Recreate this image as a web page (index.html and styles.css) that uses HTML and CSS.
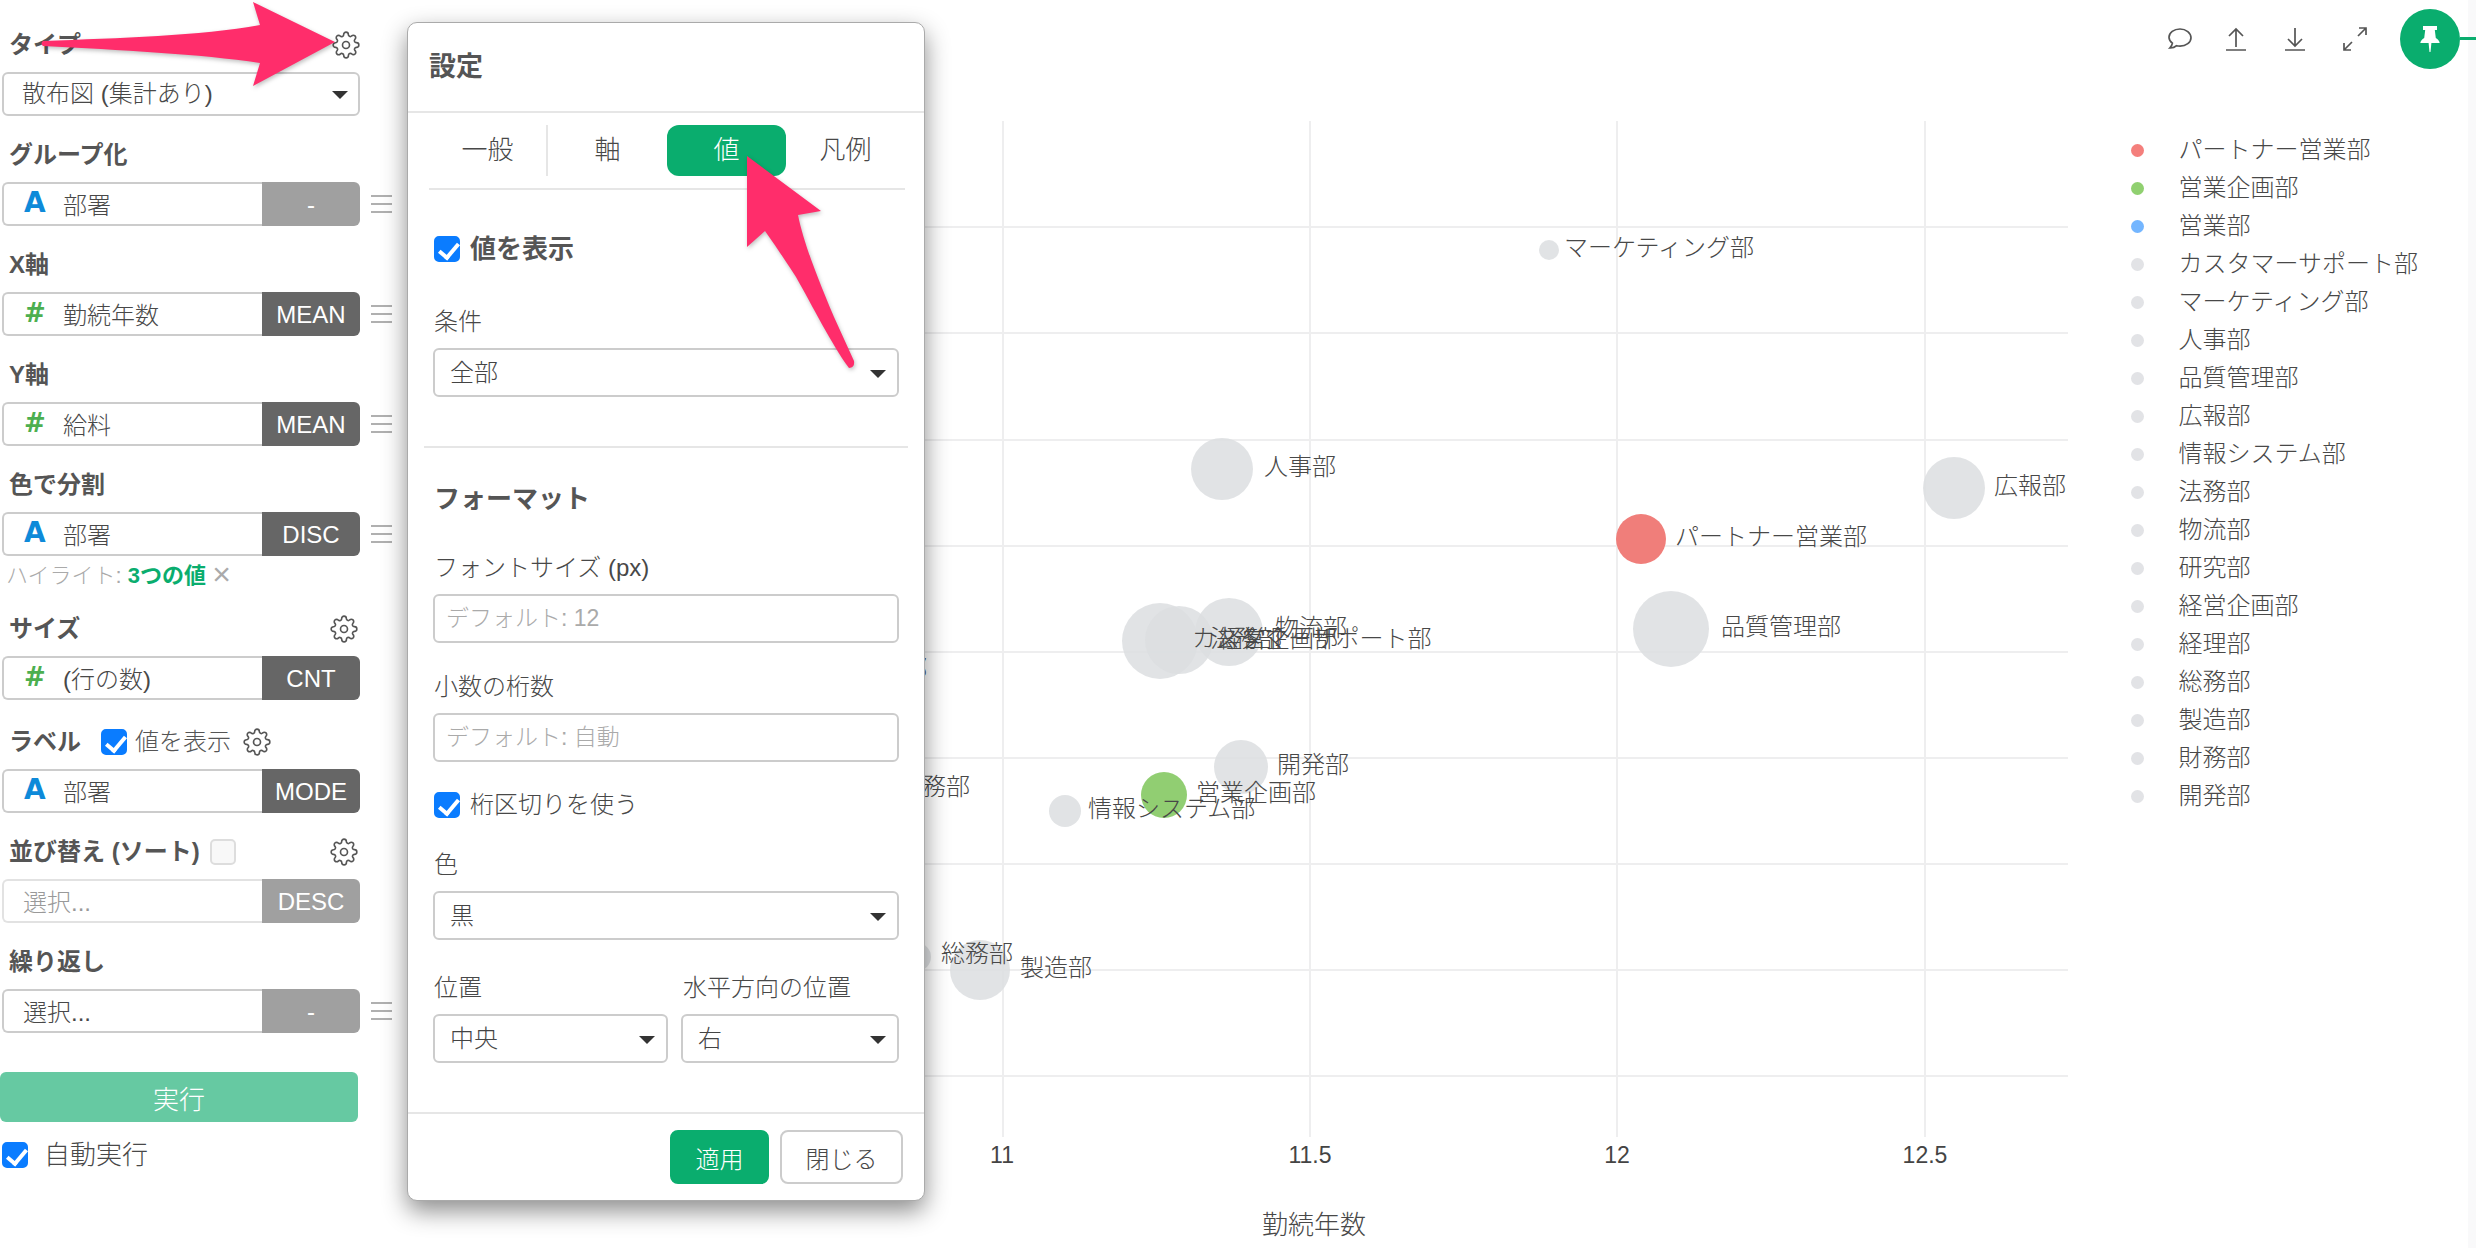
FILE: index.html
```html
<!DOCTYPE html>
<html lang="ja">
<head>
    <meta charset="UTF-8">
    <title>設定</title>
    <link rel="stylesheet" href="styles.css">
</head>
<body>
    <svg class="icon-defs" width="0" height="0">
        <symbol id="gear" viewBox="0 0 24 24">
            <circle cx="12" cy="12" r="3"/>
            <path d="M19.4 15a1.65 1.65 0 0 0 .33 1.82l.06.06a2 2 0 0 1 0 2.83 2 2 0 0 1-2.83 0l-.06-.06a1.65 1.65 0 0 0-1.82-.33 1.65 1.65 0 0 0-1 1.51V21a2 2 0 0 1-2 2 2 2 0 0 1-2-2v-.09A1.65 1.65 0 0 0 9 19.4a1.65 1.65 0 0 0-1.82.33l-.06.06a2 2 0 0 1-2.83 0 2 2 0 0 1 0-2.83l.06-.06a1.65 1.65 0 0 0 .33-1.82 1.65 1.65 0 0 0-1.51-1H3a2 2 0 0 1-2-2 2 2 0 0 1 2-2h.09A1.65 1.65 0 0 0 4.6 9a1.65 1.65 0 0 0-.33-1.82l-.06-.06a2 2 0 0 1 0-2.83 2 2 0 0 1 2.83 0l.06.06a1.65 1.65 0 0 0 1.82.33H9a1.65 1.65 0 0 0 1-1.51V3a2 2 0 0 1 2-2 2 2 0 0 1 2 2v.09a1.65 1.65 0 0 0 1 1.51 1.65 1.65 0 0 0 1.82-.33l.06-.06a2 2 0 0 1 2.83 0 2 2 0 0 1 0 2.83l-.06.06a1.65 1.65 0 0 0-.33 1.82V9a1.65 1.65 0 0 0 1.51 1H21a2 2 0 0 1 2 2 2 2 0 0 1-2 2h-.09a1.65 1.65 0 0 0-1.51 1z"/>
        </symbol>
    </svg>

    <div class="layout">
        <aside class="sidebar">
            <section class="group">
                <div class="group-label">タイプ<svg class="gear gear-top"><use href="#gear"/></svg></div>
                <div class="field-row">
                    <div class="select"><span>散布図 (集計あり)</span><i class="caret"></i></div>
                </div>
            </section>
            <section class="group">
                <div class="group-label">グループ化</div>
                <div class="field-row">
                    <div class="field"><b class="type type-a">A</b><span>部署</span></div>
                    <div class="tag tag-off">-</div>
                    <i class="handle"></i>
                </div>
            </section>
            <section class="group">
                <div class="group-label">X軸</div>
                <div class="field-row">
                    <div class="field"><b class="type type-n">#</b><span>勤続年数</span></div>
                    <div class="tag">MEAN</div>
                    <i class="handle"></i>
                </div>
            </section>
            <section class="group">
                <div class="group-label">Y軸</div>
                <div class="field-row">
                    <div class="field"><b class="type type-n">#</b><span>給料</span></div>
                    <div class="tag">MEAN</div>
                    <i class="handle"></i>
                </div>
            </section>
            <section class="group">
                <div class="group-label">色で分割</div>
                <div class="field-row">
                    <div class="field"><b class="type type-a">A</b><span>部署</span></div>
                    <div class="tag">DISC</div>
                    <i class="handle"></i>
                </div>
                <div class="hint">ハイライト: <b>3つの値</b> <span class="hint-clear">×</span></div>
            </section>
            <section class="group group-size">
                <div class="group-label">サイズ<svg class="gear"><use href="#gear"/></svg></div>
                <div class="field-row">
                    <div class="field"><b class="type type-n">#</b><span>(行の数)</span></div>
                    <div class="tag">CNT</div>
                </div>
            </section>
            <section class="group">
                <div class="group-label group-label-start">ラベル
                    <input class="check check-label" type="checkbox" checked>
                    <span class="label-note">値を表示</span>
                    <svg class="gear"><use href="#gear"/></svg>
                </div>
                <div class="field-row">
                    <div class="field"><b class="type type-a">A</b><span>部署</span></div>
                    <div class="tag">MODE</div>
                </div>
            </section>
            <section class="group">
                <div class="group-label">
                    <span class="sort-title">並び替え (ソート)<input class="check" type="checkbox"></span>
                    <svg class="gear"><use href="#gear"/></svg>
                </div>
                <div class="field-row">
                    <div class="field field-empty"><span>選択...</span></div>
                    <div class="tag tag-off">DESC</div>
                </div>
            </section>
            <section class="group">
                <div class="group-label">繰り返し</div>
                <div class="field-row">
                    <div class="field field-plain"><span>選択...</span></div>
                    <div class="tag tag-off">-</div>
                    <i class="handle"></i>
                </div>
            </section>
            <button class="run-button">実行</button>
            <label class="auto-run"><input class="check" type="checkbox" checked>自動実行</label>
        </aside>

        <main class="main">
            <svg class="chart" viewBox="400 0 1700 1248" width="1700" height="1248">
                <g class="grid">
                    <path d="M1003 121V1137M1310 121V1137M1617 121V1137M1925 121V1137"/>
                    <path d="M900 227H2068M900 333H2068M900 440H2068M900 546H2068M900 652H2068M900 758H2068M900 864H2068M900 970H2068M900 1076H2068"/>
                </g>
                <g class="bubbles">
                    <circle cx="1549" cy="250" r="10"/>
                    <circle cx="1222" cy="469" r="31"/>
                    <circle cx="1954" cy="488" r="31"/>
                    <circle cx="1671" cy="629" r="38"/>
                    <circle cx="1229" cy="632" r="34"/>
                    <circle cx="1160" cy="641" r="38"/>
                    <circle cx="1179" cy="640" r="34"/>
                    <circle cx="1241" cy="767" r="27"/>
                    <circle cx="1065" cy="811" r="16"/>
                    <circle cx="917" cy="957" r="14"/>
                    <circle cx="980" cy="970" r="30"/>
                    <circle class="bubble-red" cx="1641" cy="539" r="25"/>
                    <circle class="bubble-green" cx="1164" cy="795" r="23"/>
                </g>
                <g class="chart-labels">
                    <text x="1564" y="247">マーケティング部</text>
                    <text x="1264" y="466">人事部</text>
                    <text x="1994" y="485">広報部</text>
                    <text x="1675" y="536">パートナー営業部</text>
                    <text x="1721" y="626">品質管理部</text>
                    <text x="1275" y="627">物流部</text>
                    <text x="1192" y="638">カスタマーサポート部</text>
                    <text x="1210" y="638">法務部</text>
                    <text x="1218" y="638">経営企画部</text>
                    <text x="855" y="668">研究部</text>
                    <text x="1277" y="764">開発部</text>
                    <text x="898" y="786">財務部</text>
                    <text x="1196" y="792">営業企画部</text>
                    <text x="1088" y="808">情報システム部</text>
                    <text x="941" y="953">総務部</text>
                    <text x="1020" y="967">製造部</text>
                </g>
                <g class="chart-ticks">
                    <text x="1002" y="1155">11</text>
                    <text x="1310" y="1155">11.5</text>
                    <text x="1617" y="1155">12</text>
                    <text x="1925" y="1155">12.5</text>
                </g>
                <text class="chart-axis-title" x="1314" y="1225">勤続年数</text>
            </svg>

            <div class="side-panel">
                <div class="toolbar">
                    <svg class="tool tool-comment" viewBox="0 0 26 24" width="26" height="24"><path d="M13 2C6.9 2 2 5.6 2 10.2c0 2.4 1.4 4.5 3.4 6-.2 1.6-1.2 3.4-2.6 4.8 2.6.1 5.2-.8 6.8-2.3 1.1.3 2.2.4 3.4.4 6.1 0 11-3.7 11-8.3S19.1 2 13 2z"/></svg>
                    <svg class="tool tool-upload" viewBox="0 0 20 24" width="20" height="24"><path d="M10 2v18M3 9l7-7 7 7M0 23h20"/></svg>
                    <svg class="tool tool-download" viewBox="0 0 20 24" width="20" height="24"><path d="M10 1v18M3 12l7 7 7-7M0 23h20"/></svg>
                    <svg class="tool tool-expand" viewBox="0 0 24 24" width="24" height="24"><path d="M1 23l8-8M15 9l8-8M16 1h7v7M1 16v7h7"/></svg>
                    <div class="pin-button">
                        <svg viewBox="0 0 20 26" width="20" height="26"><path d="M3 0h14v4h-2.200l1 8c2.200 1 3.600 3 3.900 5H.3c.3-2 1.700-4 3.900-5l1-8H3zM8.600 17h2.800l-.9 9h-1z"/></svg>
                    </div>
                </div>
                <ul class="legend">
                    <li><i class="dot dot-red"></i>パートナー営業部</li>
                    <li><i class="dot dot-green"></i>営業企画部</li>
                    <li><i class="dot dot-blue"></i>営業部</li>
                    <li><i class="dot"></i>カスタマーサポート部</li>
                    <li><i class="dot"></i>マーケティング部</li>
                    <li><i class="dot"></i>人事部</li>
                    <li><i class="dot"></i>品質管理部</li>
                    <li><i class="dot"></i>広報部</li>
                    <li><i class="dot"></i>情報システム部</li>
                    <li><i class="dot"></i>法務部</li>
                    <li><i class="dot"></i>物流部</li>
                    <li><i class="dot"></i>研究部</li>
                    <li><i class="dot"></i>経営企画部</li>
                    <li><i class="dot"></i>経理部</li>
                    <li><i class="dot"></i>総務部</li>
                    <li><i class="dot"></i>製造部</li>
                    <li><i class="dot"></i>財務部</li>
                    <li><i class="dot"></i>開発部</li>
                </ul>
            </div>
        </main>
    </div>

    <div class="modal">
        <header class="modal-header">設定</header>
        <nav class="tabs">
            <div class="tab tab-split">一般</div>
            <div class="tab">軸</div>
            <div class="tab tab-active">値</div>
            <div class="tab">凡例</div>
        </nav>
        <div class="modal-body">
            <label class="modal-check modal-check-bold"><input class="check" type="checkbox" checked>値を表示</label>
            <div class="form-label form-label-first">条件</div>
            <div class="select select-modal"><span>全部</span><i class="caret"></i></div>
            <hr class="modal-divider">
            <h3 class="modal-heading">フォーマット</h3>
            <div class="form-label form-label-font">フォントサイズ (px)</div>
            <div class="text-input">デフォルト: 12</div>
            <div class="form-label form-label-digits">小数の桁数</div>
            <div class="text-input">デフォルト: 自動</div>
            <label class="modal-check modal-check-sep"><input class="check" type="checkbox" checked>桁区切りを使う</label>
            <div class="form-label form-label-color">色</div>
            <div class="select select-modal"><span>黒</span><i class="caret"></i></div>
            <div class="form-cols">
                <div class="form-col-left">
                    <div class="form-label">位置</div>
                    <div class="select select-modal"><span>中央</span><i class="caret"></i></div>
                </div>
                <div class="form-col-right">
                    <div class="form-label">水平方向の位置</div>
                    <div class="select select-modal"><span>右</span><i class="caret"></i></div>
                </div>
            </div>
        </div>
        <footer class="modal-footer">
            <button class="btn btn-primary">適用</button>
            <button class="btn">閉じる</button>
        </footer>
    </div>

    <svg class="arrows" viewBox="0 0 2476 1248" width="2476" height="1248">
        <path d="M43 41C120 38 200 36 260 25L253 2L335 42L253 86L260 63C200 54 120 50 43 46Q40 43.500 43 41Z"/>
        <path d="M747 156L821 211L798 215C803 240 815 272 834 317L854 361Q855 368 849 368C832 345 812 305 796 277C785 260 775 245 765 231L747 247Z"/>
    </svg>
</body>
</html>
```

FILE: styles.css
```css
* {
    box-sizing: border-box;
}

body {
    margin: 0;
    position: relative;
    width: 2476px;
    height: 1248px;
    overflow: hidden;
    background: #fff;
    color: #484848;
    font-family: "Liberation Sans", "Noto Sans CJK JP", sans-serif;
    font-size: 24px;
    font-weight: 300;
}

.icon-defs {
    position: absolute;
}

.layout {
    display: flex;
    height: 100%;
}

/* sidebar */
.sidebar {
    flex: none;
    width: 400px;
    padding: 29px 0 0 2px;
}

.group {
    margin-bottom: 23px;
}

.group-size {
    margin-bottom: 26px;
}

.group-label {
    display: flex;
    align-items: center;
    justify-content: space-between;
    width: 358px;
    height: 32px;
    margin-bottom: 11px;
    padding: 0 2px 0 7px;
    color: #555;
    font-weight: bold;
    line-height: 32px;
}

.group-label-start {
    justify-content: flex-start;
}

.gear {
    flex: none;
    width: 28px;
    height: 28px;
    fill: none;
    stroke: #555;
    stroke-width: 1.400;
}

.gear-top {
    margin-right: -2px;
}

.label-note {
    margin: 0 12px 0 8px;
    font-weight: 300;
}

.group-label .check-label {
    margin-left: 20px;
}

.sort-title {
    display: flex;
    align-items: center;
}

.sort-title .check {
    margin-left: 10px;
}

.field-row {
    display: flex;
    align-items: stretch;
    height: 44px;
}

.select {
    position: relative;
    display: flex;
    align-items: center;
    width: 358px;
    padding-left: 18px;
    border: 2px solid #ccc;
    border-radius: 6px;
    background: #fff;
    line-height: 40px;
}

.caret {
    position: absolute;
    right: 10px;
    top: 50%;
    margin-top: -3px;
    border-style: solid;
    border-width: 8px 8px 0;
    border-color: #333 transparent transparent;
}

.field {
    display: flex;
    align-items: center;
    width: 260px;
    padding-bottom: 2px;
    border: 2px solid #ccc;
    border-right: 0;
    border-radius: 6px 0 0 6px;
}

.field-empty {
    padding-left: 19px;
    border-color: #e2e2e2;
    color: #999;
}

.field-plain {
    padding-left: 19px;
}

.type {
    flex: none;
    width: 59px;
    padding-left: 20px;
    font-family: "DejaVu Sans", sans-serif;
    font-weight: bold;
    line-height: 40px;
}

.type-a {
    color: #0e8ad9;
    font-size: 28px;
}

.type-n {
    color: #4caf50;
    font-size: 26px;
}

.tag {
    width: 98px;
    border-radius: 0 6px 6px 0;
    background: #666;
    color: #fff;
    font-size: 24px;
    line-height: 45px;
    text-align: center;
}

.tag-off {
    background: #a0a0a0;
}

.handle {
    position: relative;
    flex: none;
    align-self: center;
    width: 21px;
    height: 18px;
    margin-left: 11px;
    border-top: 2px solid #b0b0b0;
    border-bottom: 2px solid #b0b0b0;
}

.handle::after {
    content: "";
    position: absolute;
    left: 0;
    right: 0;
    top: 6px;
    height: 2px;
    background: #b0b0b0;
}

.hint {
    height: 31px;
    margin: 4px 0 -1px 4px;
    color: #aaa;
    font-size: 22px;
    line-height: 31px;
}

.hint b {
    color: #0aad6e;
    font-weight: bold;
}

.hint-clear {
    font-size: 32px;
    line-height: 0;
    vertical-align: -2px;
}

.check {
    flex: none;
    position: relative;
    width: 26px;
    height: 26px;
    margin: 0;
    border: 2px solid #ddd;
    border-radius: 5px;
    background: #f8f8f8;
    appearance: none;
}

.check:checked {
    border-color: #0a7cff;
    background: #0a7cff;
}

.check:checked::after {
    content: "";
    position: absolute;
    left: 7px;
    top: 1px;
    width: 8px;
    height: 16px;
    border: solid #fff;
    border-width: 0 4px 4px 0;
    transform: rotate(40deg);
}

.run-button {
    display: block;
    width: 358px;
    height: 50px;
    margin: 39px 0 20px -2px;
    border: 0;
    border-radius: 6px;
    background: #66c9a2;
    color: #fff;
    font-family: inherit;
    font-size: 26px;
    font-weight: inherit;
}

.auto-run {
    display: flex;
    align-items: center;
    gap: 16px;
    font-size: 26px;
    line-height: 26px;
}

/* chart */
.main {
    flex: 1;
    display: flex;
    min-width: 0;
}

.chart {
    flex: none;
}

.grid path {
    fill: none;
    stroke: #eeeeef;
    stroke-width: 2;
}

.bubbles circle {
    fill: #dcdee0;
    fill-opacity: 0.85;
}

.bubbles .bubble-red {
    fill: #ef7773;
    fill-opacity: 0.95;
}

.bubbles .bubble-green {
    fill: #8bcb6a;
    fill-opacity: 0.95;
}

.chart-labels text,
.chart-ticks text,
.chart-axis-title {
    fill: #484848;
    font-size: 24px;
    dominant-baseline: central;
}

.chart-ticks text {
    fill: #444;
    font-size: 23px;
    text-anchor: middle;
}

.chart-axis-title {
    font-size: 26px;
    text-anchor: middle;
}

/* toolbar and legend */
.side-panel {
    position: relative;
    flex: 1;
    border-right: 8px solid #f9f9fa;
}

.toolbar {
    display: flex;
    align-items: center;
    justify-content: flex-end;
    height: 60px;
    margin-top: 9px;
    padding-right: 8px;
}

.tool {
    fill: none;
    stroke: #555;
    stroke-width: 1.700;
}

.tool-comment {
    margin-right: 33px;
}

.tool-upload {
    margin-right: 39px;
}

.tool-download {
    margin-right: 38px;
}

.tool-expand {
    margin-right: 33px;
}

.pin-button {
    position: relative;
    display: flex;
    align-items: center;
    justify-content: center;
    width: 60px;
    height: 60px;
    border-radius: 50%;
    background: #0aad6e;
    fill: #fff;
}

.pin-button::after {
    content: "";
    position: absolute;
    left: 60px;
    top: 28px;
    width: 16px;
    height: 3px;
    background: #0aad6e;
}

.legend {
    margin: 62px 0 0;
    padding: 0 0 0 31px;
    list-style: none;
}

.legend li {
    display: flex;
    align-items: center;
    height: 38px;
    line-height: 38px;
}

.dot {
    flex: none;
    width: 13px;
    height: 13px;
    margin-right: 34.500px;
    border-radius: 50%;
    background: #e2e3e6;
}

.dot-red {
    background: #f47f7c;
}

.dot-green {
    background: #90d070;
}

.dot-blue {
    background: #74b6ff;
}

/* settings dialog */
.modal {
    position: absolute;
    left: 407px;
    top: 22px;
    display: flex;
    flex-direction: column;
    width: 518px;
    height: 1179px;
    border: 1px solid #aaa;
    border-radius: 10px;
    background: #fff;
    box-shadow: 0 10px 25px rgba(0, 0, 0, 0.45);
}

.modal-header {
    flex: none;
    height: 90px;
    padding-left: 21px;
    border-bottom: 2px solid #e6e6e6;
    color: #555;
    font-size: 27px;
    font-weight: bold;
    line-height: 88px;
}

.tabs {
    flex: none;
    display: grid;
    grid-template-columns: repeat(4, 1fr);
    height: 77px;
    margin: 0 19px 0 21px;
    padding: 12px 0 12px;
    border-bottom: 2px solid #e6e6e6;
}

.tab {
    height: 51px;
    border-radius: 12px;
    font-size: 26px;
    line-height: 51px;
    text-align: center;
}

.tab-split {
    border-right: 2px solid #e6e6e6;
    border-radius: 0;
}

.tab-active {
    background: #0aad6e;
    color: #fff;
}

.modal-body {
    flex: 1;
    padding: 0 25px;
}

.modal-check {
    display: flex;
    align-items: center;
    gap: 10px;
    line-height: 26px;
}

.modal-check-bold {
    margin: 46px 0 0 1px;
    color: #555;
    font-size: 26px;
    font-weight: bold;
}

.modal-check-sep {
    margin: 30px 0 0 1px;
    font-size: 24px;
}

.form-label {
    height: 30px;
    margin-bottom: 11px;
    padding-left: 1px;
    line-height: 30px;
}

.form-label-first {
    margin-top: 45px;
}

.form-label-font {
    margin-top: 39px;
}

.form-label-digits {
    margin-top: 29px;
}

.form-label-color {
    margin-top: 32px;
}

.select-modal {
    width: 100%;
    height: 49px;
    padding-left: 15px;
    color: #444;
    line-height: 45px;
}

.select-modal .caret {
    right: 11px;
}

.modal-divider {
    height: 2px;
    margin: 49px -9px 36px;
    border: 0;
    background: #e6e6e6;
}

.modal-heading {
    height: 30px;
    margin: 0;
    padding-left: 1px;
    color: #555;
    font-size: 26px;
    font-weight: bold;
    line-height: 30px;
}

.text-input {
    height: 49px;
    padding-left: 11px;
    border: 2px solid #ccc;
    border-radius: 6px;
    color: #aaa;
    font-size: 23px;
    line-height: 45px;
}

.form-cols {
    display: flex;
    justify-content: space-between;
    margin-top: 33px;
}

.form-col-left {
    width: 235px;
}

.form-col-right {
    width: 218px;
}

.form-col-right .form-label {
    padding-left: 2px;
}

.modal-footer {
    flex: none;
    display: flex;
    justify-content: flex-end;
    gap: 11px;
    height: 88px;
    padding: 16px 21px 0 0;
    border-top: 2px solid #e6e6e6;
}

.btn {
    width: 123px;
    height: 54px;
    border: 2px solid #ccc;
    border-radius: 8px;
    background: #fff;
    color: #484848;
    font-family: inherit;
    font-size: 24px;
    font-weight: inherit;
}

.btn-primary {
    width: 99px;
    border-color: #0aad6e;
    background: #0aad6e;
    color: #fff;
}

/* annotation arrows drawn on top of the screenshot */
.arrows {
    position: absolute;
    left: 0;
    top: 0;
    fill: #ff2d6b;
    filter: drop-shadow(1px 2px 2px rgba(0, 0, 0, 0.25));
    pointer-events: none;
}
```
